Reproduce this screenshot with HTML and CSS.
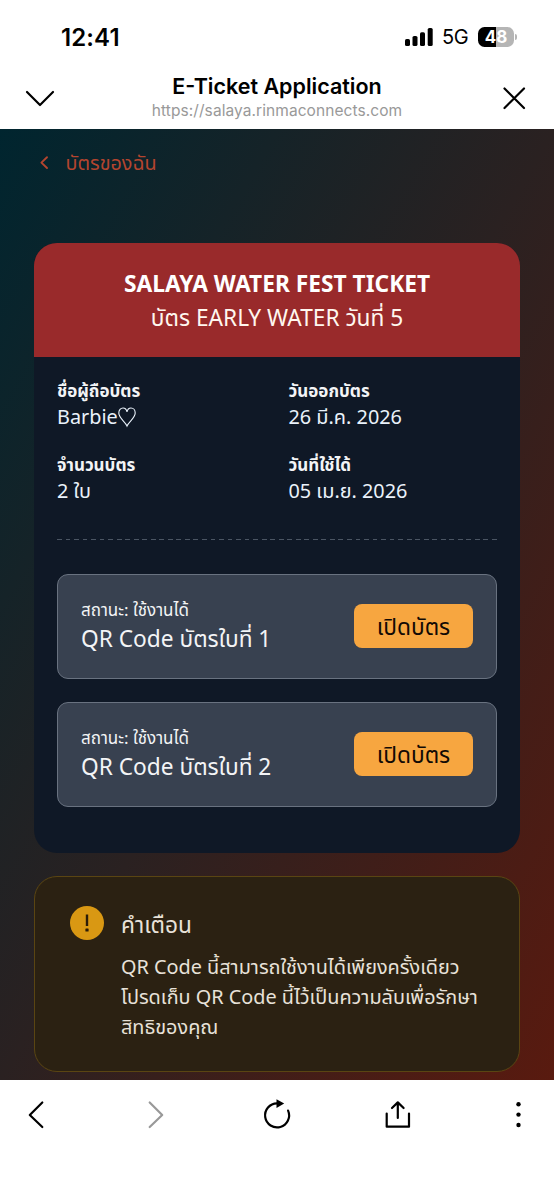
FILE: index.html
```
<!DOCTYPE html>
<html lang="th">
<head>
<meta charset="utf-8">
<title>E-Ticket Application</title>
<link rel="stylesheet" href="styles.css">
</head>
<body>
<div class="phone">
  <header class="top">
    <div class="status">
      <span class="clock">12:41</span>
      <div class="indicators">
        <svg class="signal" width="28" height="18" viewBox="0 0 28 18"><rect x="0" y="11" width="5" height="7" rx="1.6"/><rect x="7.5" y="8" width="5" height="10" rx="1.6"/><rect x="15" y="4.3" width="5" height="13.7" rx="1.6"/><rect x="22.7" y="0" width="5" height="18" rx="1.6"/></svg>
        <span class="network">5G</span>
        <div class="battery"><span class="level">48</span><span class="nub"></span></div>
      </div>
    </div>
    <div class="browser-bar">
      <svg class="icon" width="30" height="30" viewBox="0 0 30 30"><path d="M2 9 15 22 28 9"/></svg>
      <div class="page-info">
        <div class="page-title">E-Ticket Application</div>
        <div class="page-url">https://salaya.rinmaconnects.com</div>
      </div>
      <svg class="icon" width="30" height="30" viewBox="0 0 30 30"><path d="M5.5 5.5 25 25M25 5.5 5.5 25"/></svg>
    </div>
  </header>

  <main class="content">
    <a class="back"><svg width="9" height="14" viewBox="0 0 9 14"><path d="M7 1.2 1.4 6.6 7 12"/></svg><span>บัตรของฉัน</span></a>

    <section class="ticket">
      <div class="ticket-head">
        <h1 class="event">SALAYA WATER FEST TICKET</h1>
        <p class="kind">บัตร EARLY WATER วันที่ 5</p>
      </div>
      <div class="ticket-body">
        <div class="facts">
          <div class="fact"><div class="label">ชื่อผู้ถือบัตร</div><div class="value">Barbie<svg class="heart" width="18" height="20" viewBox="0 0 18 20"><path d="M9 19C7.5 15 .8 11 .8 6 .8 3.2 2.6 1 5 1 7.3 1 8.6 2.8 9 5 9.4 2.8 10.7 1 13 1 15.4 1 17.2 3.2 17.2 6 17.2 11 10.5 15 9 19Z"/></svg></div></div>
          <div class="fact"><div class="label">วันออกบัตร</div><div class="value">26 มี.ค. 2026</div></div>
          <div class="fact"><div class="label">จำนวนบัตร</div><div class="value">2 ใบ</div></div>
          <div class="fact"><div class="label">วันที่ใช้ได้</div><div class="value">05 เม.ย. 2026</div></div>
        </div>
        <div class="divider"></div>
        <div class="codes">
          <div class="code">
            <div class="code-text"><div class="state">สถานะ: ใช้งานได้</div><div class="name">QR Code บัตรใบที่ 1</div></div>
            <button class="open">เปิดบัตร</button>
          </div>
          <div class="code">
            <div class="code-text"><div class="state">สถานะ: ใช้งานได้</div><div class="name">QR Code บัตรใบที่ 2</div></div>
            <button class="open">เปิดบัตร</button>
          </div>
        </div>
      </div>
    </section>

    <section class="warning">
      <svg class="alert" width="34" height="34" viewBox="0 0 34 34"><circle cx="17" cy="17" r="17"/><path d="M15.8 8.5H18.2V20H15.8Z"/><rect x="15.4" y="22.4" width="3.2" height="3.2" rx=".6"/></svg>
      <div class="warning-text">
        <h2 class="warning-title">คำเตือน</h2>
        <p class="warning-copy">QR Code นี้สามารถใช้งานได้เพียงครั้งเดียว<br>โปรดเก็บ QR Code นี้ไว้เป็นความลับเพื่อรักษา<br>สิทธิของคุณ</p>
      </div>
    </section>
  </main>

  <nav class="toolbar">
    <svg class="icon" width="30" height="30" viewBox="0 0 30 30"><path d="M21.3 2.5 8.8 15 21.3 27"/></svg>
    <svg class="icon muted" width="30" height="30" viewBox="0 0 30 30"><path d="M7.7 2.5 20.2 15 7.7 27"/></svg>
    <svg class="icon" width="30" height="30" viewBox="0 0 30 30"><path d="M15 3.4A12 12 0 1 0 26.1 10.6"/><path class="solid" d="M14.5-.8 22.2 3.5 14.5 8Z"/></svg>
    <svg class="icon" width="30" height="30" viewBox="0 0 30 30"><path d="M3.7 13.5V26.7H26V13.5M14.8 18V3M9 8 14.8 2.4 20.6 8"/></svg>
    <svg class="icon" width="30" height="30" viewBox="0 0 30 30"><g class="dots"><circle cx="15.5" cy="4.3" r="2.2"/><circle cx="15.5" cy="14.6" r="2.2"/><circle cx="15.5" cy="25" r="2.2"/></g></svg>
  </nav>
</div>
</body>
</html>
```
FILE: styles.css
```
* { box-sizing: border-box; }
body { margin: 0; background: #fff; }
h1, h2, p { margin: 0; font-weight: 400; }
svg { display: block; flex: none; overflow: visible; }

.phone {
  width: 554px;
  height: 1200px;
  display: flex;
  flex-direction: column;
  overflow: hidden;
  font-family: "Noto Sans", "Noto Sans Thai", sans-serif;
  color: #f3f4f6;
}

.top { height: 129px; flex: none; font-family: Inter, sans-serif; color: #000; }
.status {
  height: 74px;
  padding: 0 37px 0 61px;
  display: flex;
  align-items: center;
  justify-content: space-between;
}
.clock { font-size: 24px; font-weight: 600; letter-spacing: 0.1px; }
.indicators { display: flex; align-items: center; }
.network { margin-left: 9px; width: 36px; font-size: 20px; line-height: 20px; letter-spacing: -0.5px; white-space: nowrap; }
.battery { display: flex; align-items: center; gap: 1px; }
.level {
  width: 36px;
  height: 20px;
  border-radius: 6.5px;
  background: linear-gradient(90deg, #000 49%, #b5b5b5 49%);
  color: #fff;
  font-size: 17px;
  font-weight: 700;
  line-height: 20px;
  text-align: center;
}
.nub { width: 2px; height: 6px; border-radius: 0 2px 2px 0; background: #b5b5b5; }

.browser-bar {
  height: 55px;
  padding: 0 25px;
  display: flex;
  justify-content: space-between;
}
.browser-bar .icon { margin-top: 9px; }
.page-info { text-align: center; white-space: nowrap; }
.page-title { margin-top: -1px; font-size: 21.5px; font-weight: 600; line-height: 26px; letter-spacing: 0; }
.page-url { margin-top: 1px; font-size: 15.5px; line-height: 22px; color: #999; letter-spacing: 0.07px; }
.icon { fill: none; stroke: #000; stroke-width: 2.2; stroke-linecap: round; stroke-linejoin: round; }

.content {
  height: 951px;
  flex: none;
  padding: 21px 34px 8px;
  background: linear-gradient(to bottom right, #00252f, #2a2121 50%, #591a0f);
}
.back { display: flex; align-items: center; gap: 16.5px; height: 28px; padding-left: 6px; font-size: 19.8px; color: #b4452f; }
.back svg { margin-top: -2px; fill: none; stroke: #b4452f; stroke-width: 1.9; stroke-linecap: round; stroke-linejoin: round; }

.ticket { margin-top: 65px; height: 610px; border-radius: 23px; overflow: hidden; background: #0f1826; }
.ticket-head { height: 114px; padding-top: 24px; background: #992a2b; text-align: center; color: #fff7ef; }
.event { font-size: 22.75px; font-weight: 700; line-height: 34px; color: #fff; white-space: nowrap; }
.kind { font-size: 22.7px; line-height: 34px; white-space: nowrap; }
.ticket-body { padding: 20px 23px 0; }
.facts { display: grid; grid-template-columns: 1fr 1fr; column-gap: 23px; row-gap: 20px; }
.fact { height: 54px; white-space: nowrap; }
.label { font-size: 17px; font-weight: 700; line-height: 28px; }
.value { display: flex; align-items: center; font-size: 19.85px; line-height: 24px; color: #eaf2fb; }
.heart { fill: none; stroke: #eaf2fb; stroke-width: 1.1; }
.divider {
  margin-top: 34px;
  height: 1px;
  background: repeating-linear-gradient(90deg, #4b5563 0 4.8px, transparent 4.8px 8.53px);
}
.codes { margin-top: 34px; display: flex; flex-direction: column; gap: 23px; }
.code {
  height: 105px;
  padding: 0 23px;
  display: flex;
  align-items: center;
  justify-content: space-between;
  border: 1.4px solid #697280;
  border-radius: 11px;
  background: #384150;
  white-space: nowrap;
}
.code-text { padding-bottom: 4px; }
.state { font-size: 17px; line-height: 28px; }
.name { font-size: 22.7px; line-height: 30px; }
.open {
  width: 119px;
  height: 44px;
  padding: 4px 0 0;
  margin-bottom: 2px;
  border: 0;
  border-radius: 8px;
  background: #f7a640;
  color: #120a05;
  font: inherit;
  font-size: 22.7px;
}

.warning {
  margin-top: 23px;
  height: 196px;
  padding: 29px 33px 29px 34.5px;
  display: flex;
  gap: 17.5px;
  border: 1.4px solid #5a4512;
  border-radius: 23px;
  background: #2b2112;
  color: #e8e2d9;
}
.alert circle { fill: #d99813; }
.alert path, .alert rect { fill: #2b1c08; }
.warning-title { font-size: 22.7px; line-height: 38px; }
.warning-copy { margin-top: 8px; font-size: 19.85px; line-height: 30px; white-space: nowrap; }

.toolbar { height: 120px; padding: 20px 21px 0; display: flex; justify-content: space-between; }
.toolbar .muted { stroke: #999; }
.toolbar .solid { fill: #000; stroke: none; }
.toolbar .dots { fill: #000; stroke: none; }
```
